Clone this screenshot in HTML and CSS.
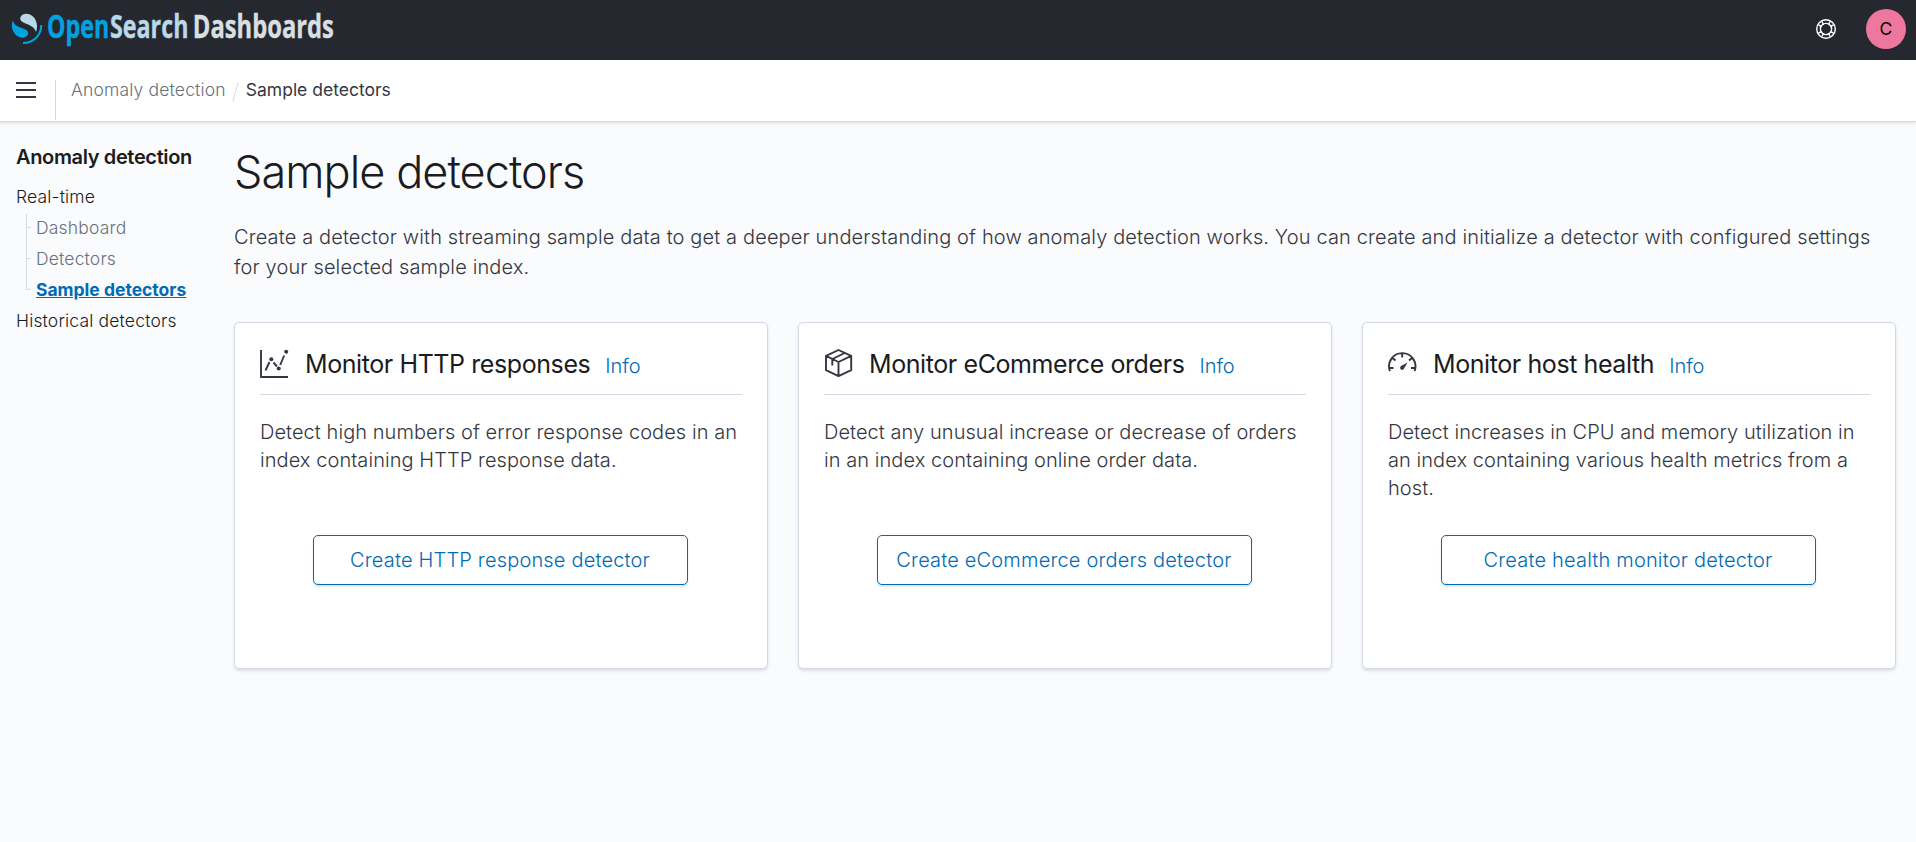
FILE: index.html
```html
<!DOCTYPE html>
<html lang="en">
<head>
<meta charset="utf-8">
<title>Sample detectors - OpenSearch Dashboards</title>
<link rel="stylesheet" href="styles.css">
</head>
<body>
<header class="topbar">
  <svg class="logo" width="340" height="60" viewBox="0 0 340 60" role="img" aria-label="OpenSearch Dashboards">
    <path class="logo-blue" d="M13 20.500C11 24.500 11.500 29.500 15 34C19 38.800 26 39 28 34.500C29 31.500 27 30 23 28.500C17.500 26.500 13.500 25 13 20.500Z"/>
    <path class="logo-pale" d="M36 32C38 27 37 21 33.500 17C29.500 12.500 22.500 12.500 20.500 17C19.500 20 21.500 21.700 25.500 23.500C31 25.500 34.500 27.500 36 32Z"/>
    <path class="logo-arc" d="M41.300 25C41 35.500 33.500 43 23 43"/>
    <g class="logo-text">
      <text class="logo-blue" transform="translate(47 37.700) scale(.705 1)">Open</text>
      <text class="logo-pale" transform="translate(110 37.700) scale(.705 1)">Search</text>
      <text class="logo-gray" transform="translate(192.800 37.700) scale(.72 1)">Dashboards</text>
    </g>
  </svg>
  <div class="actions">
    <svg class="help" width="20" height="20" viewBox="0 0 20 20"><circle cx="10" cy="10" r="9.300"/><circle cx="10" cy="10" r="5.600"/><path d="M2.500 6L6 7.500M6 2.500L7.500 6M14 2.500L12.500 6M17.500 6L14 7.500M17.500 14L14 12.500M14 17.500L12.500 14M6 17.500L7.500 14M2.500 14L6 12.500"/></svg>
    <span class="avatar">C</span>
  </div>
</header>
<div class="crumbbar">
  <button class="menu" aria-label="Menu"><svg width="20" height="16" viewBox="0 0 20 16"><path d="M0 1H20M0 8H20M0 15H20"/></svg></button>
  <nav class="crumbs"><a>Anomaly detection</a><i class="slash"></i><span>Sample detectors</span></nav>
</div>
<div class="page">
  <aside class="sidebar">
    <h2>Anomaly detection</h2>
    <a class="nav-item">Real-time</a>
    <div class="tree">
      <a class="nav-item">Dashboard</a>
      <a class="nav-item">Detectors</a>
      <a class="nav-item current">Sample detectors</a>
    </div>
    <a class="nav-item">Historical detectors</a>
  </aside>
  <main class="content">
    <h1>Sample detectors</h1>
    <p class="intro">Create a detector with streaming sample data to get a deeper understanding of how anomaly detection works. You can create and initialize a detector with configured settings for your selected sample index.</p>
    <div class="cards">
      <section class="card">
        <div class="card-head">
          <svg class="icon" width="30" height="30" viewBox="0 0 30 30"><path d="M2 2V29H29M6.500 22.500L10.500 14M14.500 14.500L18 18.500M21.200 17L25.200 7.500"/><g class="dots"><circle cx="12.300" cy="11.200" r="2"/><circle cx="19.700" cy="20.500" r="2"/><circle cx="27.200" cy="3.800" r="2"/></g></svg>
          <h3>Monitor HTTP responses</h3><a class="info">Info</a>
        </div>
        <p>Detect high numbers of error response codes in an index containing HTTP response data.</p>
        <button class="create">Create HTTP response detector</button>
      </section>
      <section class="card">
        <div class="card-head">
          <svg class="icon" width="30" height="30" viewBox="0 0 30 30"><path d="M15.500 2L28.200 7.800V22.200L15.500 28.200L3 22.200V7.800ZM3 7.800L15.500 14L28.200 7.800M15.500 14V28.200M9.300 17.500V11L21.800 5"/></svg>
          <h3>Monitor eCommerce orders</h3><a class="info">Info</a>
        </div>
        <p>Detect any unusual increase or decrease of orders in an index containing online order data.</p>
        <button class="create">Create eCommerce orders detector</button>
      </section>
      <section class="card">
        <div class="card-head">
          <svg class="icon" width="30" height="30" viewBox="0 0 30 30"><path d="M3 23.200A13.200 13.200 0 1 1 27.500 23.200M15.200 5V9.500M5.500 10L8.500 12.500M25 10L22 12.500M2.500 20H6.500M28 20H24"/><path class="needle" d="M20.500 14.500L17.300 20A2.100 2.100 0 1 1 14.500 17.800Z"/></svg>
          <h3>Monitor host health</h3><a class="info">Info</a>
        </div>
        <p>Detect increases in CPU and memory utilization in an index containing various health metrics from a host.</p>
        <button class="create">Create health monitor detector</button>
      </section>
    </div>
  </main>
</div>
</body>
</html>
```
FILE: styles.css
```css
* { box-sizing: border-box; }
body { margin: 0; min-height: 842px; background: #fafbfd; color: #343741; font: 350 17.5px/1.5 Inter, sans-serif; letter-spacing: 0.01em; overflow: hidden; }
h1, h2, h3, p { margin: 0; }
button { font: inherit; letter-spacing: inherit; cursor: pointer; }
.topbar { height: 60px; background: #25282f; display: flex; justify-content: space-between; }
.logo-blue { fill: #00a3e0; stroke: #00a3e0; }
.logo-pale { fill: #b9d9eb; stroke: #b9d9eb; }
.logo-gray { fill: #d9dfe0; stroke: #d9dfe0; }
path.logo-blue, path.logo-pale { stroke: none; }
.logo-arc { fill: none; stroke: #00a3e0; stroke-width: 2; }
.logo-text { font: 700 33px "Open Sans", sans-serif; letter-spacing: 0; stroke-width: 0.4; }
.actions { display: flex; align-items: center; gap: 30px; padding: 0 10px 2px 0; }
.help { fill: none; stroke: #fff; stroke-width: 1.4; }
.avatar { width: 40px; height: 40px; border-radius: 50%; background: #ee789d; color: #000; display: flex; align-items: center; justify-content: center; font-size: 17.5px; font-weight: 400; }
.crumbbar { position: relative; height: 61px; background: #fff; display: flex; align-items: flex-start; box-shadow: 0 1px 0 #d3dae6, 0 2px 3px rgba(152, 162, 179, .35); }
.menu { width: 56px; height: 60px; padding: 0 0 0 16px; border: 0; background: none; display: flex; align-items: center; }
.menu path { stroke: #343741; stroke-width: 2; }
.crumbs { margin: 20px 0 0 -1px; height: 40px; padding: 7px 0 0 15px; border-left: 1px solid #d3dae6; display: flex; align-items: flex-start; line-height: 26px; }
.crumbs > * { margin-top: -10px; }
.crumbs a { color: #69707d; }
.crumbs span { font-weight: 400; letter-spacing: 0; }
.crumbs .slash { width: 1px; height: 20px; margin: -5px 10px 0 9px; background: #d3dae6; transform: rotate(15deg); }
.page { display: flex; }
.sidebar { width: 234px; padding: 21px 0 0 16px; color: #1a1c21; }
.sidebar h2 { font-size: 20px; font-weight: 600; line-height: 30px; margin-bottom: 9px; letter-spacing: -0.018em; }
.nav-item { display: block; height: 31px; line-height: 31px; }
.tree { margin-left: 10px; position: relative; }
.tree::before { content: ""; position: absolute; left: 0; top: 2px; bottom: 15px; width: 1px; background: #d3dae6; }
.tree .nav-item { display: flex; align-items: center; color: #69707d; }
.tree .nav-item::before { content: ""; width: 5px; height: 1px; background: #d3dae6; margin-right: 5px; }
.tree .current { color: #006bb4; font-weight: 700; text-decoration: underline; letter-spacing: 0; }
.content { flex: 1; padding: 21px 20px 0 0; }
h1 { font-size: 45px; line-height: 60px; font-weight: 300; color: #1a1c21; letter-spacing: -0.021em; }
.intro { margin-top: 20px; font-size: 20px; line-height: 30px; letter-spacing: 0.0066em; }
.cards { margin-top: 40px; display: grid; grid-template-columns: repeat(3, 1fr); gap: 30px; }
.card { height: 347px; background: #fff; border: 1px solid #d3dae6; border-radius: 5px; box-shadow: 0 2px 3px rgba(152, 162, 179, .3); padding: 25px; display: flex; flex-direction: column; }
.card-head { height: 47px; border-bottom: 1px solid #d3dae6; display: flex; align-items: flex-start; }
.icon { fill: none; stroke: #343741; stroke-width: 1.9; stroke-linejoin: round; margin-left: -1px; }
.dots, .needle { fill: #343741; stroke: none; }
h3 { margin-left: 16px; font-size: 25px; line-height: 32px; font-weight: 400; color: #1a1c21; letter-spacing: -0.0165em; }
.info { margin-left: 15px; font-size: 20px; line-height: 37px; color: #006bb4; letter-spacing: 0; }
.card p { height: 84px; margin-top: 23px; font-size: 20px; line-height: 28px; letter-spacing: 0.003em; }
.create { align-self: center; margin: 33px 2px 0 0; width: 375px; height: 50px; border: 1px solid #006bb4; border-radius: 5px; background: #fff; color: #006bb4; font-size: 20px; letter-spacing: 0.009em; padding: 0; box-shadow: 0 2px 2px rgba(152, 162, 179, .3); }
```
